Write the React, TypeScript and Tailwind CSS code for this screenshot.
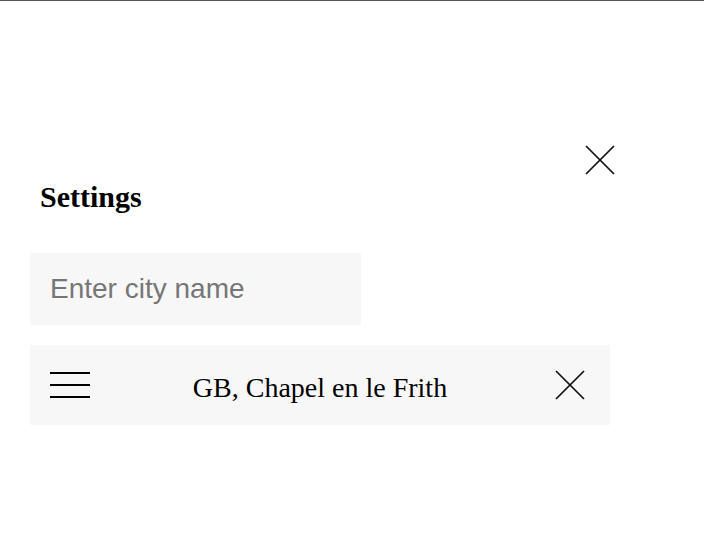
import React, { useState } from 'react';

const CloseIcon: React.FC<{ className?: string }> = ({ className }) => (
  <svg viewBox="0 0 30 30" className={className} fill="none" stroke="#111" strokeWidth={1.7}>
    <line x1="1" y1="1" x2="29" y2="29" />
    <line x1="29" y1="1" x2="1" y2="29" />
  </svg>
);

const App: React.FC = () => {
  const [city, setCity] = useState('');

  return (
    <div className="min-h-[557px] w-[704px] border-t border-[#555] bg-white">
      <div className="px-[30px] pt-[144px]">
        {/* close */}
        <div className="flex w-[585px] justify-end">
          <button className="h-[30px] w-[30px]">
            <CloseIcon className="h-[30px] w-[30px]" />
          </button>
        </div>

        <h2 className="ml-[10px] mt-[5px] text-[30px] font-bold leading-[34px] text-black [font-family:'Liberation_Serif',serif]">
          Settings
        </h2>

        <input
          type="text"
          value={city}
          onChange={(e) => setCity(e.target.value)}
          placeholder="Enter city name"
          className="mt-[39px] block h-[72px] w-[331px] bg-[#f7f7f7] pl-[20px] text-[28px] text-black outline-none placeholder:text-[#767676] [font-family:'Liberation_Sans',Arial,sans-serif]"
        />

        {/* saved city */}
        <div className="mt-[20px] grid h-[80px] w-[580px] grid-cols-[1fr_auto_1fr] items-center bg-[#f7f7f7] px-[20px]">
          <div className="flex w-[40px] flex-col gap-[10px]">
            <span className="block h-[2px] w-[40px] bg-black" />
            <span className="block h-[2px] w-[40px] bg-black" />
            <span className="block h-[2px] w-[40px] bg-black" />
          </div>
          <span className="pt-[6px] text-[28px] leading-[32px] text-black [font-family:'Liberation_Serif',serif]">
            GB, Chapel en le Frith
          </span>
          <div className="flex justify-end pr-[5px]">
            <button className="h-[30px] w-[30px]">
              <CloseIcon className="h-[30px] w-[30px]" />
            </button>
          </div>
        </div>
      </div>
    </div>
  );
};

export default App;
